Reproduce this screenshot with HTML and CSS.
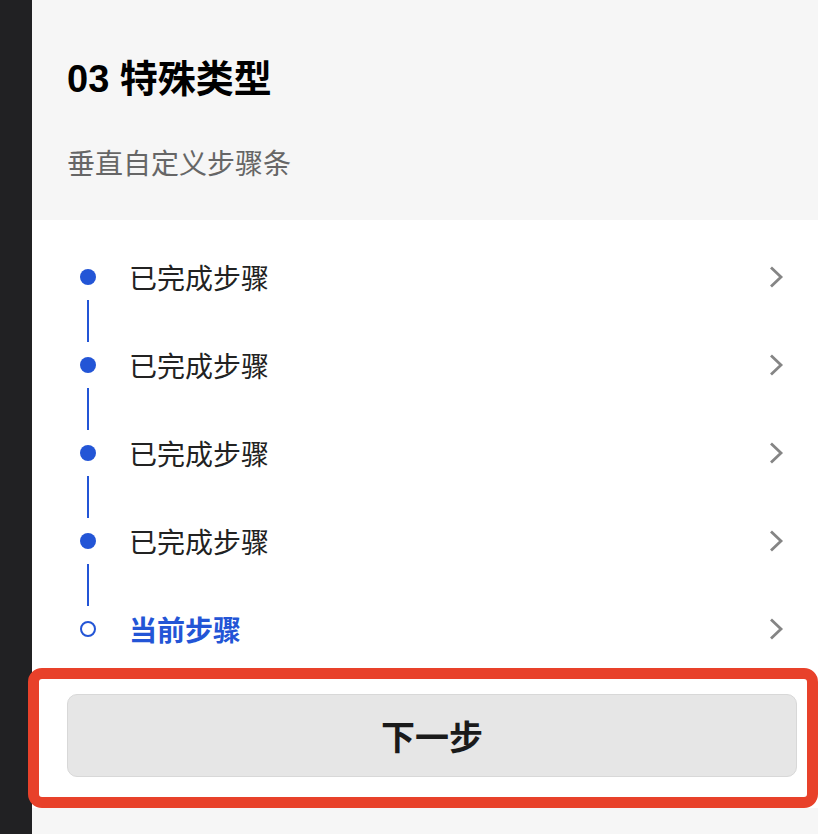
FILE: index.html
```html
<!DOCTYPE html>
<html lang="zh-CN">
<head>
  <meta charset="UTF-8">
  <meta name="viewport" content="width=device-width, initial-scale=1.0">
  <title>特殊类型</title>
  <link rel="stylesheet" href="styles.css">
</head>
<body>
  <div class="sidebar"></div>

  <div class="main">
    <!-- Section header -->
    <div class="section-header">
      <h1 class="section-title">03 特殊类型</h1>
      <p class="section-desc">垂直自定义步骤条</p>
    </div>

    <!-- Vertical steps -->
    <div class="steps-panel">
      <div class="steps">
        <div class="step done">
          <span class="step-dot"></span>
          <span class="step-label">已完成步骤</span>
          <svg class="step-arrow" viewBox="0 0 16 24"><polyline points="3,2.5 13,12 3,21.5"/></svg>
        </div>
        <div class="step-line"></div>
        <div class="step done">
          <span class="step-dot"></span>
          <span class="step-label">已完成步骤</span>
          <svg class="step-arrow" viewBox="0 0 16 24"><polyline points="3,2.5 13,12 3,21.5"/></svg>
        </div>
        <div class="step-line"></div>
        <div class="step done">
          <span class="step-dot"></span>
          <span class="step-label">已完成步骤</span>
          <svg class="step-arrow" viewBox="0 0 16 24"><polyline points="3,2.5 13,12 3,21.5"/></svg>
        </div>
        <div class="step-line"></div>
        <div class="step done">
          <span class="step-dot"></span>
          <span class="step-label">已完成步骤</span>
          <svg class="step-arrow" viewBox="0 0 16 24"><polyline points="3,2.5 13,12 3,21.5"/></svg>
        </div>
        <div class="step-line"></div>
        <div class="step current">
          <span class="step-dot"></span>
          <span class="step-label">当前步骤</span>
          <svg class="step-arrow" viewBox="0 0 16 24"><polyline points="3,2.5 13,12 3,21.5"/></svg>
        </div>
      </div>

      <button class="next-button">下一步</button>
    </div>
  </div>

  <!-- Highlight frame -->
  <div class="highlight"></div>
</body>
</html>
```

FILE: styles.css
```css
* {
  box-sizing: border-box;
  margin: 0;
  padding: 0;
}

body {
  font-family: "Noto Sans CJK SC", "Liberation Sans", sans-serif;
  background-color: #f6f6f6;
  display: flex;
  min-height: 100vh;
  position: relative;
}

.sidebar {
  width: 32px;
  flex-shrink: 0;
  background-color: #212123;
}

.main {
  flex: 1;
}

/* Header */
.section-header {
  padding: 57px 35px 41px;
}

.section-title {
  font-family: "Liberation Sans", "Noto Sans CJK SC", sans-serif;
  font-size: 38px;
  line-height: 45px;
  font-weight: 700;
  color: #000;
}

.section-desc {
  margin-top: 43px;
  font-size: 28px;
  line-height: 34px;
  color: #666;
}

/* Steps */
.steps-panel {
  background-color: #fff;
  padding: 34px 21px 31px 35px;
}

.steps {
  padding: 0 13px 0 13px;
}

.step {
  display: flex;
  align-items: center;
  height: 46px;
}

.step-dot {
  width: 16px;
  height: 16px;
  border-radius: 50%;
  background-color: #2355d6;
  flex-shrink: 0;
}

.step.current .step-dot {
  background-color: #fff;
  border: 2px solid #2355d6;
}

.step-label {
  flex: 1;
  margin-left: 33px;
  font-size: 28px;
  color: #222;
}

.step.current .step-label {
  color: #2355d6;
  font-weight: 700;
}

.step-arrow {
  width: 16px;
  height: 24px;
  fill: none;
  stroke: #858585;
  stroke-width: 2.8;
}

.step-line {
  width: 2px;
  height: 42px;
  margin-left: 7px;
  background-color: #2355d6;
}

/* Button */
.next-button {
  display: block;
  width: 100%;
  height: 83px;
  margin-top: 42px;
  background-color: #e6e6e6;
  border: 1px solid #d8d8d8;
  border-radius: 10px;
  font-family: inherit;
  font-size: 34px;
  font-weight: 700;
  color: #1a1a1a;
}

/* Annotation frame over the button */
.highlight {
  position: absolute;
  left: 28px;
  top: 668px;
  width: 790px;
  height: 140px;
  border: 11px solid #e8412a;
  border-radius: 14px;
  pointer-events: none;
}
```
